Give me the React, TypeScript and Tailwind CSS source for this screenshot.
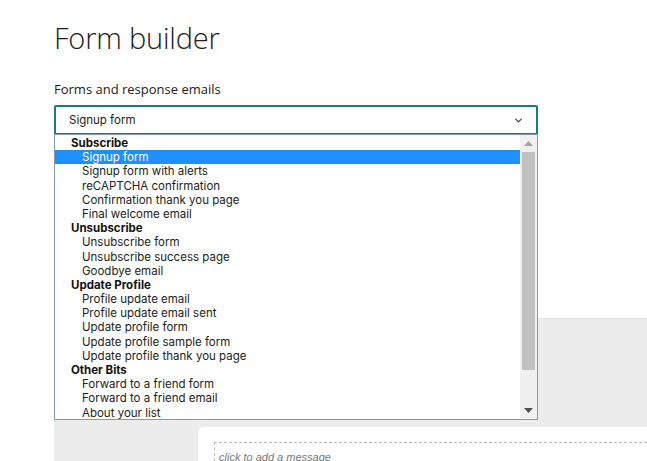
import { ChevronDown } from "lucide-react";

// ─── Data ─────────────────────────────────────────────────────────────────────
const groups: { label: string; items: string[] }[] = [
  {
    label: "Subscribe",
    items: ["Signup form", "Signup form with alerts", "reCAPTCHA confirmation", "Confirmation thank you page", "Final welcome email"],
  },
  {
    label: "Unsubscribe",
    items: ["Unsubscribe form", "Unsubscribe success page", "Goodbye email"],
  },
  {
    label: "Update Profile",
    items: [
      "Profile update email",
      "Profile update email sent",
      "Update profile form",
      "Update profile sample form",
      "Update profile thank you page",
    ],
  },
  {
    label: "Other Bits",
    items: ["Forward to a friend form", "Forward to a friend email", "About your list"],
  },
];

const selected = "Signup form";

// ─── Helpers ──────────────────────────────────────────────────────────────────
function Listbox() {
  return (
    <div className="absolute left-0 top-[29px] z-10 flex h-[286px] w-[484px] border border-[#7f9db9] bg-white pt-[1px] font-['Inter',sans-serif]">
      <div className="flex-1 overflow-hidden">
        {groups.map(g => (
          <div key={g.label}>
            <div className="h-[14.2px] pl-[16px] text-[11.5px] font-bold leading-[14.2px] text-[#111]">{g.label}</div>
            {g.items.map(item => (
              <div
                key={item}
                className={`h-[14.2px] pl-[27px] text-[11.5px] leading-[14.2px] ${
                  item === selected ? "bg-[#1e90ff] text-white" : "text-[#222]"
                }`}
              >
                {item}
              </div>
            ))}
          </div>
        ))}
      </div>
      {/* scrollbar */}
      <div className="-mt-[1px] flex w-[17px] flex-col items-center bg-[#f0f0f0]">
        <div className="flex h-[17px] items-center justify-center">
          <svg width="9" height="5" viewBox="0 0 9 5"><path d="M4.5 0 L9 5 L0 5 Z" fill="#a3a3a3" /></svg>
        </div>
        <div className="h-[218px] w-[13px] bg-[#c1c1c1]" />
        <div className="flex-1" />
        <div className="flex h-[17px] items-center justify-center">
          <svg width="9" height="5" viewBox="0 0 9 5"><path d="M0 0 L9 0 L4.5 5 Z" fill="#505050" /></svg>
        </div>
      </div>
    </div>
  );
}

// ─── Main Component ───────────────────────────────────────────────────────────
export default function App() {
  return (
    <div className="min-h-[461px] overflow-hidden bg-white font-['Open_Sans',sans-serif] text-[#241c15]">
      <div className="pl-[54px] pt-[18px]">
        <h1 className="text-[29px] font-light leading-[40px] tracking-[-0.2px]">Form builder</h1>
        <p className="mt-[22px] text-[13px] leading-[18px]">Forms and response emails</p>
        <div className="relative mt-[7px] w-[484px]">
          <div className="flex h-[30px] items-center justify-between rounded-[2px] border-2 border-[#167b83] pl-[13px] pr-[12px] pt-[1px] font-['Inter',sans-serif] text-[11.5px]">
            <span>Signup form</span>
            <ChevronDown className="h-[11px] w-[11px] text-[#444]" strokeWidth={3} />
          </div>
          <Listbox />
        </div>

        {/* preview canvas under the menu */}
        <div className="mt-[183px] h-[150px] border-t border-[#e0e0e0] bg-[#ececec] pl-[144px] pt-[108px]">
          <div className="h-[40px] rounded-tl-[6px] bg-white pl-[16px] pt-[15px]">
            <div className="h-[30px] border-l border-t border-dashed border-[#bbb] pl-[4px]">
              <span className="font-['Liberation_Sans',sans-serif] text-[11px] italic leading-[13px] text-[#777]">click to add a message</span>
            </div>
          </div>
        </div>
      </div>
    </div>
  );
}
